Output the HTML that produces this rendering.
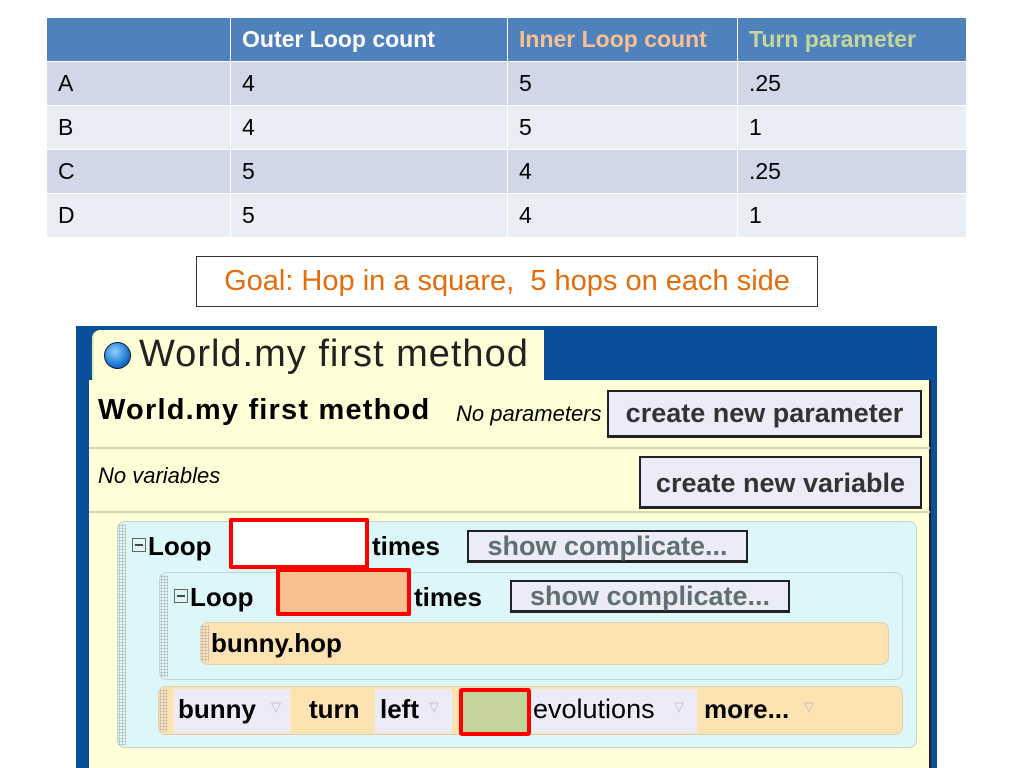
<!DOCTYPE html>
<html><head><meta charset="utf-8"><style>
*{margin:0;padding:0;box-sizing:border-box}
body{width:1024px;height:768px;background:#fff;position:relative;overflow:hidden;font-family:"Liberation Sans",Arial,sans-serif}
.a{position:absolute}
table{position:absolute;left:46px;top:17px;width:921px;border-collapse:collapse}
td{height:44px;font-size:23px;padding-left:11px;border:1.5px solid #fff;color:#000}
th{height:44px;font-size:23px;text-align:left;padding-left:11px;background:#4f81bd;border:1.5px solid #fff;color:#fff;white-space:nowrap}
tr.o td{background:#d0d8e8}tr.e td{background:#e9edf4}
.goal{left:196px;top:256px;width:622px;height:51px;border:1px solid #333;color:#e46c0a;font-size:29px;line-height:49px;text-align:center;white-space:nowrap}
.btn{position:absolute;background:#ecebf8;border:2px solid #222;border-bottom:3px solid #222;color:#333;font-weight:bold;font-size:27px;text-align:center;white-space:nowrap;font-family:"Liberation Sans",Arial,sans-serif}
.blk{position:absolute;border-radius:8px;border:1.5px solid #c4d4d4}
.dots{position:absolute;left:0;top:2px;bottom:2px;width:8px;background-image:radial-gradient(#b0b0b0 0.8px,transparent 1px);background-size:3px 3px}
.t{position:absolute;font-weight:bold;font-size:26px;color:#000;white-space:nowrap}
.chip{position:absolute;background:#ecebf8;top:2px;height:44px}
.small{position:absolute;font-size:13px;color:#bbb}
.box{display:inline-block;width:14px;height:14px;border:1.5px solid #666;position:relative;top:-3px;margin-right:2px}
.box:after{content:"";position:absolute;left:2px;right:2px;top:5px;height:1.5px;background:#444}
</style></head><body>
<table>
<tr><th style="width:184px"></th><th style="width:277px">Outer Loop count</th><th style="width:230px;color:#fac090">Inner Loop count</th><th style="color:#c3d69b">Turn parameter</th></tr>
<tr class="o"><td>A</td><td>4</td><td>5</td><td>.25</td></tr>
<tr class="e"><td>B</td><td>4</td><td>5</td><td>1</td></tr>
<tr class="o"><td>C</td><td>5</td><td>4</td><td>.25</td></tr>
<tr class="e"><td>D</td><td>5</td><td>4</td><td>1</td></tr>
</table>
<div class="a goal">Goal: Hop in a square,&nbsp; 5 hops on each side</div>

<div class="a" style="left:76px;top:326px;width:861px;height:442px;background:#0a4f9a"></div>
<div class="a" style="left:92px;top:330px;width:452px;height:52px;background:#ffffd8;border-radius:8px 0 0 0;border-left:2px solid #e8e8c0"></div>
<div class="a" style="left:104px;top:342px;width:27px;height:27px;border-radius:50%;background:radial-gradient(circle at 40% 35%,#8fd0ff,#1a78d0 60%,#0a3c80);border:1.5px solid #113"></div>
<div class="a" style="left:139px;top:330px;font-size:38px;line-height:48px;color:#222;letter-spacing:1px;white-space:nowrap">World.my first method</div>
<div class="a" style="left:89px;top:380px;width:842px;height:388px;background:#ffffd8;border-right:2px solid #222"></div>
<div class="a" style="left:89px;top:447px;width:841px;height:2px;background:#d8d8b0"></div>
<div class="a" style="left:89px;top:511px;width:841px;height:2px;background:#d8d8b0"></div>
<div class="a" style="left:98px;top:394px;font-weight:bold;font-size:29px;color:#000;letter-spacing:1.2px;white-space:nowrap">World.my first method</div>
<div class="a" style="left:456px;top:401px;font-style:italic;font-size:22px;color:#000;width:150px;overflow:hidden;white-space:nowrap">No parameters</div>
<div class="btn" style="left:607px;top:390px;width:315px;height:48px;line-height:43px">create new parameter</div>
<div class="a" style="left:98px;top:463px;font-style:italic;font-size:22px;color:#000">No variables</div>
<div class="btn" style="left:639px;top:456px;width:283px;height:53px;line-height:50px">create new variable</div>

<div class="blk" style="left:117px;top:521px;width:800px;height:227px;background:#dcf6f9"><div class="dots"></div></div>
<div class="t" style="left:132px;top:531px"><span class="box"></span>Loop</div>
<div class="a" style="left:229px;top:518px;width:140px;height:51px;background:#fff;border:4px solid #f00;border-radius:2px"></div>
<div class="t" style="left:372px;top:531px">times</div>
<div class="btn" style="left:467px;top:530px;width:281px;height:33px;line-height:28px;color:#607070;font-size:27px">show complicate...</div>

<div class="blk" style="left:159px;top:572px;width:744px;height:108px;background:#dcf6f9"><div class="dots"></div></div>
<div class="t" style="left:174px;top:582px"><span class="box"></span>Loop</div>
<div class="a" style="left:276px;top:568px;width:135px;height:48px;background:#f8c090;border:4px solid #f00;border-radius:2px"></div>
<div class="t" style="left:414px;top:582px">times</div>
<div class="btn" style="left:510px;top:580px;width:280px;height:33px;line-height:28px;color:#607070;font-size:27px">show complicate...</div>

<div class="blk" style="left:200px;top:622px;width:689px;height:43px;background:#fde2b2;border-color:#e0d0b0"><div class="dots"></div></div>
<div class="t" style="left:211px;top:628px">bunny.hop</div>

<div class="blk" style="left:158px;top:686px;width:745px;height:49px;background:#fde2b2;border-color:#e0d0b0"><div class="dots"></div>
<div class="chip" style="left:15px;width:116px"></div>
<div class="chip" style="left:216px;width:77px"></div>
<div class="chip" style="left:370px;width:168px"></div>
</div>
<div class="t" style="left:178px;top:694px">bunny</div><div class="small" style="left:271px;top:699px">▽</div>
<div class="t" style="left:309px;top:694px">turn</div>
<div class="t" style="left:380px;top:694px">left</div><div class="small" style="left:429px;top:699px">▽</div>
<div class="a" style="left:459px;top:688px;width:72px;height:48px;background:#c4d49a;border:4px solid #f00;border-radius:3px"></div>
<div class="a" style="left:533px;top:694px;font-size:27px;color:#000">evolutions</div><div class="small" style="left:674px;top:699px">▽</div>
<div class="t" style="left:704px;top:694px">more...</div><div class="small" style="left:804px;top:699px">▽</div>
</body></html>
